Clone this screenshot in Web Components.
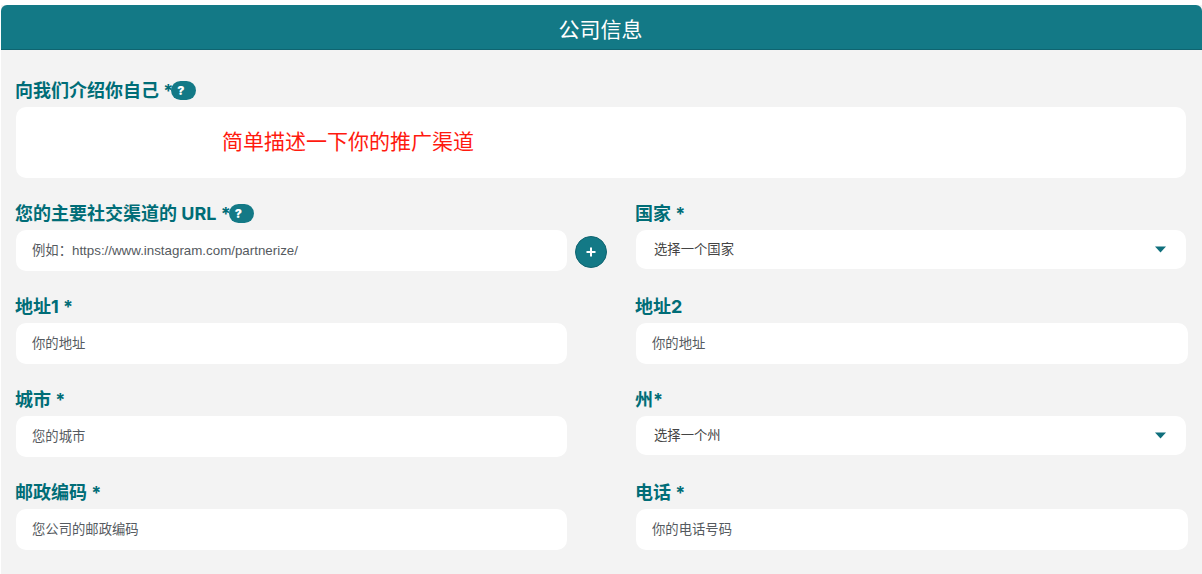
<!DOCTYPE html>
<html lang="zh">
<head>
<meta charset="utf-8">
<title>公司信息</title>
<style>
  html, body { margin: 0; background: #fff; }
  body { font-family: Inter, "Noto Sans CJK SC", sans-serif; }
</style>
</head>
<body>
<template id="field-tpl">
  <style>
    :host { display: block; min-width: 0; }
    .label {
      display: flex;
      align-items: center;
      height: 23px;
      margin: 0 0 5px -1px;
      font: 700 18px/23px Inter, "Noto Sans CJK SC", sans-serif;
      color: #006d77;
      white-space: pre;
    }
  </style>
  <div class="label" part="label"><span id="text"></span><slot name="help"></slot></div>
  <slot></slot>
</template>

<script>
const CHEVRON = '<svg width="11" height="7" viewBox="0 0 11 7"><path d="M0 0.5h11L5.5 6.5z" fill="#0f6f7c"/></svg>'

function esc(str) {
  return String(str).replace(/&/g, '&amp;').replace(/</g, '&lt;').replace(/"/g, '&quot;')
}

class PanelHead extends HTMLElement {
  connectedCallback() {
    if (this.shadowRoot) return
    this.attachShadow({ mode: 'open' }).innerHTML = `
      <style>
        :host {
          display: block;
          height: 44px;
          padding-right: 2px;
          background: #137986;
          border-bottom: 1px solid #0f6470;
          border-radius: 6px 6px 0 0;
          color: #fff;
          text-align: center;
          font: 400 21px/49px Inter, "Noto Sans CJK SC", sans-serif;
        }
      </style>
      <slot></slot>`
  }
}

class HelpBadge extends HTMLElement {
  connectedCallback() {
    if (this.shadowRoot) return
    this.attachShadow({ mode: 'open' }).innerHTML = `
      <style>
        :host {
          display: inline-flex;
          align-items: center;
          width: 25px;
          height: 19px;
          margin-left: -2px;
          box-sizing: border-box;
          padding-left: 6px;
          border-radius: 10px;
          background: #137986;
          color: #fff;
          font: 900 12px/19px Inter, sans-serif;
        }
      </style>?`
  }
}

class FormField extends HTMLElement {
  connectedCallback() {
    if (this.shadowRoot) return
    const root = this.attachShadow({ mode: 'open' })
    root.appendChild(document.getElementById('field-tpl').content.cloneNode(true))
    root.getElementById('text').textContent = this.getAttribute('label')
  }
}

class TextBox extends HTMLElement {
  connectedCallback() {
    if (this.shadowRoot) return
    const ph = this.getAttribute('placeholder') ?? ''
    this.attachShadow({ mode: 'open' }).innerHTML = `
      <style>
        :host { display: block; }
        input {
          display: block;
          width: 100%;
          height: 41px;
          box-sizing: border-box;
          padding: 0 16px;
          border: 0;
          border-radius: 10px;
          background: #fff;
          outline: 0;
          font: 400 13.333px "Liberation Sans", "Noto Sans CJK SC", sans-serif;
        }
        input::placeholder { color: #555a60; opacity: 1; }
      </style>
      <input type="text" placeholder="${esc(ph)}">`
  }
}

class SelectBox extends HTMLElement {
  connectedCallback() {
    if (this.shadowRoot) return
    this.attachShadow({ mode: 'open' }).innerHTML = `
      <style>
        :host {
          display: flex;
          align-items: center;
          justify-content: space-between;
          height: 39px;
          box-sizing: border-box;
          margin-right: 2px;
          padding: 0 20px 0 18px;
          border-radius: 10px;
          background: #fff;
          color: #444;
          font: 400 13.333px "Liberation Sans", "Noto Sans CJK SC", sans-serif;
        }
        span { padding-bottom: 2px; }
      </style>
      <span><slot></slot></span>${CHEVRON}`
  }
}

class AddButton extends HTMLElement {
  connectedCallback() {
    if (this.shadowRoot) return
    this.attachShadow({ mode: 'open' }).innerHTML = `
      <style>
        :host {
          display: flex;
          align-items: center;
          justify-content: center;
          width: 32px;
          height: 32px;
          box-sizing: border-box;
          border: 1px solid #0f6470;
          border-radius: 50%;
          background: #137986;
        }
      </style>
      <svg width="10" height="10" viewBox="0 0 10 10"><path d="M5 0.5v9M0.5 5h9" stroke="#fff" stroke-width="2"/></svg>`
  }
}

class InfoForm extends HTMLElement {
  connectedCallback() {
    if (this.shadowRoot) return
    this.attachShadow({ mode: 'open' }).innerHTML = `
      <style>
        :host {
          display: block;
          margin: 5px 0 0 1px;
          height: 569px;
          background: #f3f3f3;
          box-sizing: border-box;
        }
        .body { padding: 29px 14px 0 15px; }
        .grid {
          display: grid;
          grid-template-columns: 551px 1fr;
          column-gap: 69px;
          grid-auto-rows: 93px;
        }
      </style>
      <slot name="head"></slot>
      <div class="body">
        <slot name="intro-field"></slot>
        <div class="grid"><slot></slot></div>
      </div>`
  }
}

class IntroBox extends HTMLElement {
  connectedCallback() {
    if (this.shadowRoot) return
    this.attachShadow({ mode: 'open' }).innerHTML = `
      <style>
        :host {
          display: flex;
          align-items: center;
          height: 71px;
          box-sizing: border-box;
          padding: 0 0 6px 206px;
          margin: 0 2px 24px 0;
          border-radius: 10px;
          background: #fff;
          color: #ff1a0f;
          font: 400 21px "Liberation Sans", "Noto Sans CJK SC", sans-serif;
        }
      </style>
      <slot></slot>`
  }
}

class UrlRow extends HTMLElement {
  connectedCallback() {
    if (this.shadowRoot) return
    this.attachShadow({ mode: 'open' }).innerHTML = `
      <style>
        :host { display: block; position: relative; }
        .add { position: absolute; left: 559px; top: 6px; }
      </style>
      <slot></slot>
      <div class="add"><slot name="add"></slot></div>`
  }
}

customElements.define('panel-head', PanelHead)
customElements.define('help-badge', HelpBadge)
customElements.define('form-field', FormField)
customElements.define('text-box', TextBox)
customElements.define('select-box', SelectBox)
customElements.define('add-button', AddButton)
customElements.define('intro-box', IntroBox)
customElements.define('url-row', UrlRow)
customElements.define('info-form', InfoForm)
</script>

<info-form>
  <panel-head slot="head">公司信息</panel-head>
  <form-field slot="intro-field" label="向我们介绍你自己 *">
    <help-badge slot="help"></help-badge>
    <intro-box>简单描述一下你的推广渠道</intro-box>
  </form-field>

  <form-field label="您的主要社交渠道的 URL *">
    <help-badge slot="help"></help-badge>
    <url-row>
      <text-box placeholder="例如：https://www.instagram.com/partnerize/"></text-box>
      <add-button slot="add"></add-button>
    </url-row>
  </form-field>
  <form-field label="国家 *"><select-box>选择一个国家</select-box></form-field>

  <form-field label="地址1 *"><text-box placeholder="你的地址"></text-box></form-field>
  <form-field label="地址2"><text-box placeholder="你的地址"></text-box></form-field>

  <form-field label="城市 *"><text-box placeholder="您的城市"></text-box></form-field>
  <form-field label="州*"><select-box>选择一个州</select-box></form-field>

  <form-field label="邮政编码 *"><text-box placeholder="您公司的邮政编码"></text-box></form-field>
  <form-field label="电话 *"><text-box placeholder="你的电话号码"></text-box></form-field>
</info-form>
</body>
</html>
